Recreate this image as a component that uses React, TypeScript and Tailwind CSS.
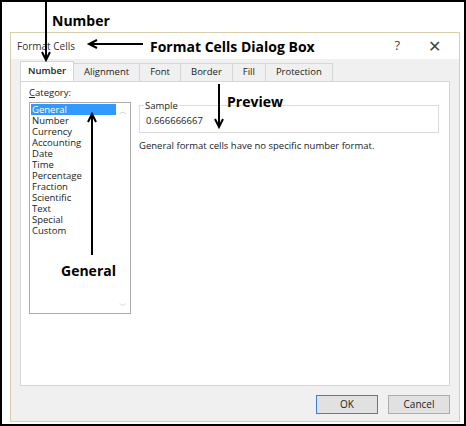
export default function App() {
  const cats = ["General","Number","Currency","Accounting","Date","Time","Percentage","Fraction","Scientific","Text","Special","Custom"];
  const tabs = ["Number","Alignment","Font","Border","Fill","Protection"];
  return (
    <div className="relative w-[466px] h-[426px] border-2 border-black bg-white overflow-hidden" style={{fontFamily:'"Open Sans","Liberation Sans",sans-serif'}}>
      <div className="absolute left-[8px] top-[30px] w-[450px] h-[390px] border border-[#d9cfae] bg-[#f0f0f0] flex flex-col text-[9.5px] text-[#222]">
        <div className="h-[26px] flex items-center px-[6px] bg-white">
          <span className="text-[10px] text-[#333]">Format Cells</span>
          <span className="ml-auto mr-[28px] text-[13px] text-[#444]">?</span>
          <span className="mr-[12px] text-[16px] text-[#444] leading-none">✕</span>
        </div>
        <div className="flex px-[9px] pt-[4px] h-[22px] items-end">
          {tabs.map((t,i)=>(
            <div key={t} className={i===0?"h-[20px] px-[7px] bg-white border border-[#d6d6d6] border-b-0 flex items-center font-semibold":"h-[18px] px-[10px] border border-[#d6d6d6] border-l-0 border-b-0 flex items-center bg-[#f0f0f0]"}>{t}</div>
          ))}
        </div>
        <div className="mx-[9px] h-[305px] bg-white border border-[#d6d6d6] flex gap-[8px] px-[8px] pt-[4px]">
          <div className="flex flex-col">
            <div className="mb-[2px]"><u>C</u>ategory:</div>
            <div className="w-[102px] h-[212px] border border-[#acacac] flex">
              <div className="flex-1 flex flex-col pt-[1px] pl-[1px]">
                {cats.map((c,i)=>(<div key={c} className={i===0?"h-[11px] leading-[11px] bg-[#3399ff] text-white px-[1px]":"h-[11px] leading-[11px] px-[1px]"}>{c}</div>))}
              </div>
              <div className="w-[14px] flex flex-col justify-between items-center text-[#bbb] text-[8px] py-[2px]"><span>︿</span><span>﹀</span></div>
            </div>
          </div>
          <div className="flex-1 pt-[15px] pr-[2px]">
            <div className="relative border border-[#dcdcdc] h-[28px] mt-[4px] flex items-end px-[6px] pb-[4px]">
              <span className="absolute -top-[7px] left-[4px] bg-white px-[1px]">Sample</span>
              0.666666667
            </div>
            <div className="mt-[6px]">General format cells have no specific number format.</div>
          </div>
        </div>
        <div className="flex justify-end gap-[10px] pr-[9px] pt-[9px] text-[10px]">
          <div className="w-[62px] h-[19px] border border-[#3c7fd3] bg-[#e1e1e1] flex items-center justify-center">OK</div>
          <div className="w-[62px] h-[19px] border border-[#adadad] bg-[#e1e1e1] flex items-center justify-center">Cancel</div>
        </div>
      </div>
      <div className="absolute left-[50px] top-[8px] text-[14px] font-bold">Number</div>
      <svg className="absolute left-0 top-0" width="466" height="426">
        <g stroke="black" strokeWidth="2" fill="none">
          <line x1="44" y1="0" x2="44" y2="56"/><polyline points="40,50 44,58 48,50"/>
          <line x1="88" y1="42" x2="141" y2="42"/><polyline points="95,38 87,42 95,46"/>
          <line x1="217" y1="82" x2="217" y2="124"/><polyline points="213,117 217,125 221,117"/>
          <line x1="90" y1="113" x2="90" y2="253"/><polyline points="86,120 90,112 94,120"/>
        </g>
      </svg>
      <div className="absolute left-[148px] top-[34px] text-[14px] font-bold">Format Cells Dialog Box</div>
      <div className="absolute left-[225px] top-[89px] text-[14px] font-bold">Preview</div>
      <div className="absolute left-[59px] top-[258px] text-[14px] font-bold">General</div>
    </div>
  );
}
